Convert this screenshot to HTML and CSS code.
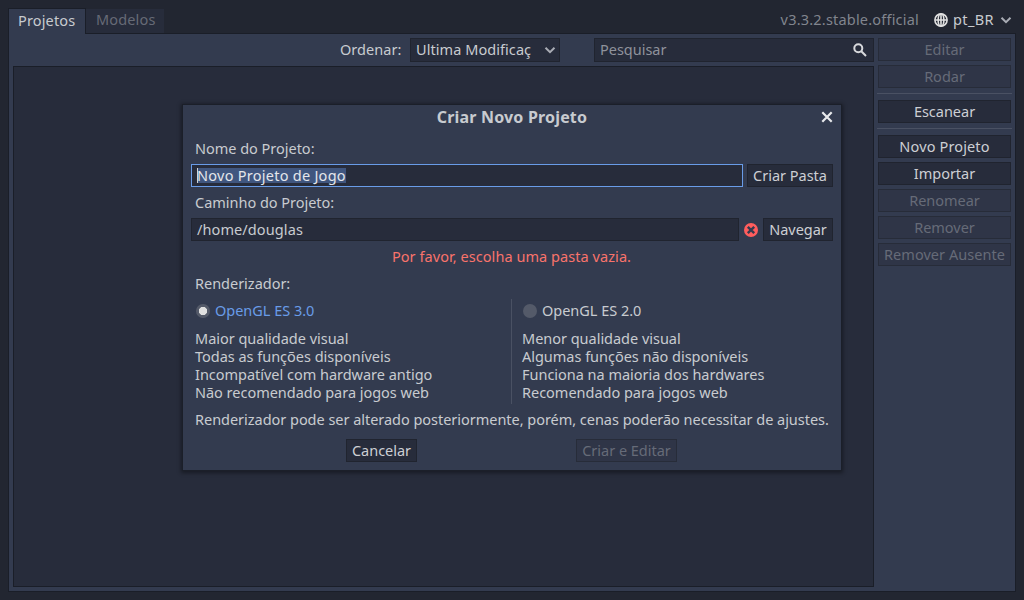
FILE: index.html
```
<!DOCTYPE html>
<html lang="pt-BR">
<head>
<meta charset="utf-8">
<title>Gerenciador de Projetos</title>
<link rel="stylesheet" href="styles.css">
</head>
<body>
<div class="app">
  <header class="topbar">
    <div class="tab tab-active"><span class="ls-tab">Projetos</span></div>
    <div class="tab tab-idle"><span class="ls-tab">Modelos</span></div>
    <div class="version">v3.3.2.stable.official</div>
    <div class="lang">
      <svg class="globe" width="14" height="14" viewBox="0 0 14 14"><circle cx="7" cy="7" r="6.100"/><ellipse cx="7" cy="7" rx="2.900" ry="6.100"/><path d="M1 7h12M7 1v12"/></svg>
      <span class="lang-name">pt_BR</span>
      <svg class="chevron" width="12" height="8" viewBox="0 0 12 8"><path d="M1.500 1.800 6 6.200l4.500-4.400"/></svg>
    </div>
  </header>
  <main class="panel">
    <section class="content">
      <div class="filters">
        <span class="sort-label">Ordenar:</span>
        <div class="select"><span>Ultima Modificaç</span><svg class="chevron" width="12" height="8" viewBox="0 0 12 8"><path d="M1.500 1.800 6 6.200l4.500-4.400"/></svg></div>
        <div class="search"><span>Pesquisar</span><svg class="lens" width="14" height="14" viewBox="0 0 14 14"><circle cx="5.300" cy="5.300" r="4"/><path d="m8.300 8.300 4.700 4.700"/></svg></div>
      </div>
      <div class="list"></div>
    </section>
    <aside class="actions">
      <button class="btn off">Editar</button>
      <button class="btn off">Rodar</button>
      <hr>
      <button class="btn">Escanear</button>
      <hr>
      <button class="btn ls-new">Novo Projeto</button>
      <button class="btn">Importar</button>
      <button class="btn off">Renomear</button>
      <button class="btn off">Remover</button>
      <button class="btn off ls-missing">Remover Ausente</button>
    </aside>
  </main>
</div>

<div class="dialog">
  <div class="title">Criar Novo Projeto<svg class="close" width="12" height="12" viewBox="0 0 12 12"><path d="m1.300 1.300 9.400 9.400m0-9.400-9.400 9.400"/></svg></div>
  <div class="label">Nome do Projeto:</div>
  <div class="row">
    <div class="input focus"><span class="selection">Novo Projeto de Jogo</span></div>
    <button class="btn mkdir">Criar Pasta</button>
  </div>
  <div class="label">Caminho do Projeto:</div>
  <div class="row">
    <div class="input"><span class="path">/home/douglas</span></div>
    <svg class="error-icon" width="16" height="16" viewBox="0 0 16 16"><circle cx="8" cy="8" r="7"/><path d="m4.800 4.800 6.400 6.400m0-6.400-6.400 6.400"/></svg>
    <button class="btn browse">Navegar</button>
  </div>
  <div class="message">Por favor, escolha uma pasta vazia.</div>
  <div class="label renderer-label">Renderizador:</div>
  <div class="renderers">
    <div class="renderer">
      <div class="option chosen"><span class="radio"></span><span class="option-name">OpenGL ES 3.0</span></div>
      <div class="desc">Maior qualidade visual<br>Todas as funções disponíveis<br>Incompatível com hardware antigo<br>Não recomendado para jogos web</div>
    </div>
    <div class="renderer second">
      <div class="option"><span class="radio"></span><span class="option-name">OpenGL ES 2.0</span></div>
      <div class="desc">Menor qualidade visual<br>Algumas funções não disponíveis<br>Funciona na maioria dos hardwares<br>Recomendado para jogos web</div>
    </div>
  </div>
  <div class="note">Renderizador pode ser alterado posteriormente, porém, cenas poderão necessitar de ajustes.</div>
  <div class="buttons">
    <button class="btn cancel">Cancelar</button>
    <button class="btn off create">Criar e Editar</button>
  </div>
</div>
</body>
</html>
```

FILE: styles.css
```
* { box-sizing: border-box; }

body {
  margin: 0;
  width: 1024px;
  height: 600px;
  overflow: hidden;
  background: #222631;
  color: #c8cbd0;
  font: 14.5px/18px "Noto Sans", sans-serif;
  letter-spacing: -0.02px;
  white-space: nowrap;
}

svg { display: block; fill: none; flex: none; }

.app {
  display: flex;
  flex-direction: column;
  height: 600px;
  padding: 8px;
}

.topbar { display: flex; height: 26px; margin-bottom: -1px; }

.tab { display: flex; align-items: center; padding-bottom: 4px; }
.tab-active {
  width: 78px;
  padding-left: 9px;
  border: 1px solid #1a1e28;
  border-bottom: 0;
  background: #333b4f;
  z-index: 1;
}
.tab-idle {
  width: 78px;
  height: 24px;
  margin-top: 1px;
  padding-left: 10px;
  background: #272c3b;
  color: #666a76;
}
.ls-tab { letter-spacing: 0.15px; }

.version {
  margin-left: auto;
  padding-top: 2px;
  color: #81858e;
  letter-spacing: 0.2px;
}
.lang { display: flex; align-items: center; height: 24px; margin: 0 4px 0 15px; }
.lang-name { width: 43px; margin: -2px 4px 0 5px; letter-spacing: 0.4px; }
.globe { stroke: #e0e0e0; stroke-width: 1.6; }
.chevron { stroke: #a9acb4; stroke-width: 2; }

.panel {
  display: flex;
  flex: 1;
  gap: 4px;
  padding: 4px 3px 4px 4px;
  border: 1px solid #1a1e28;
  background: #333b4f;
}

.content { display: flex; flex-direction: column; width: 861px; gap: 4px; }
.filters { display: flex; align-items: center; height: 24px; }
.filters span { padding-bottom: 2px; }
.sort-label { width: 63px; margin-left: 327px; letter-spacing: 0.05px; }
.select {
  display: flex;
  align-items: center;
  justify-content: space-between;
  width: 150px;
  height: 24px;
  margin-left: 7px;
  padding: 0 3px 0 5px;
  border: 1px solid #20242f;
  background: #272c3b;
  letter-spacing: 0.06px;
}
.search {
  display: flex;
  align-items: center;
  justify-content: space-between;
  width: 280px;
  height: 24px;
  margin-left: 34px;
  padding: 0 6px 0 5px;
  border: 1px solid #20242f;
  background: #272c3b;
  color: #8f929b;
}
.lens { stroke: #d8d9dc; stroke-width: 2; }
.list { flex: 1; border: 1px solid #1a1e28; background: #272c3b; }

.actions { display: flex; flex-direction: column; width: 135px; gap: 4px; }
.actions .btn { width: 133px; }
hr { width: 135px; height: 1px; margin: 1px 0 2px -1px; border: 0; background: #4a5163; }

.btn {
  height: 23px;
  padding: 0 0 1px;
  border: 1px solid #20242f;
  background: #272c3b;
  color: #cdcfd4;
  font: inherit;
  line-height: 18px;
  letter-spacing: inherit;
}
.off { border-color: #272c39; background: #2f3547; color: #666b78; }
.ls-new { letter-spacing: 0.14px; }
.ls-missing { letter-spacing: 0.04px; }

.dialog {
  position: absolute;
  left: 182px;
  top: 104px;
  width: 660px;
  height: 367px;
  padding: 0 8px;
  border: 1px solid #1b1f29;
  background: #333b4f;
  box-shadow: 0 1px 4px 1px rgba(0, 0, 0, 0.4);
}
.title {
  position: relative;
  height: 34px;
  padding-top: 3px;
  font-size: 16px;
  font-weight: 700;
  letter-spacing: 0.18px;
  text-align: center;
}
.close { position: absolute; right: 0; top: 6px; stroke: #e8e9ec; stroke-width: 2.2; }
.label { height: 25px; padding-left: 4px; }
.row { display: flex; height: 23px; margin-bottom: 6px; }
.input {
  flex: 1;
  padding: 1px 5px;
  border: 1px solid #20242f;
  background: #272c3b;
}
.focus { border-color: #699ce8; }
.selection {
  display: block;
  width: 149px;
  height: 15px;
  margin-top: 2px;
  background: #40567f;
  color: #e4e6eb;
  line-height: 15px;
  letter-spacing: 0.26px;
  box-shadow: inset 1px 0 #d0d2d7;
}
.path { display: block; letter-spacing: 0.1px; }
.mkdir { width: 86px; margin-left: 4px; }
.error-icon { margin: 4px 4px 0; }
.error-icon circle { fill: #ff5d5d; }
.error-icon path { stroke: #333b4f; stroke-width: 2.4; }
.browse { width: 70px; }
.message { height: 27px; padding-right: 1px; color: #f9736b; text-align: center; letter-spacing: 0.06px; }
.renderer-label { height: 24px; }

.renderers { display: flex; height: 105px; margin-top: 1px; }
.renderer { width: 320px; padding-left: 4px; }
.second { flex: 1; padding-left: 10px; border-left: 1px solid #4a5163; }
.option { display: flex; align-items: center; height: 23px; padding-left: 1px; }
.option-name { padding-bottom: 1px; }
.radio {
  width: 14px;
  height: 14px;
  margin: 1px 5px 0 0;
  border-radius: 50%;
  background: #545a69;
}
.chosen { color: #699ce8; }
.chosen .radio { background: radial-gradient(circle, #e0e0e0 3.8px, #545a69 4.5px); }
.desc { margin-top: 7px; }
.note { margin-top: 6px; padding-left: 4px; letter-spacing: -0.03px; }
.buttons { display: flex; margin-top: 11px; }
.cancel { width: 71px; margin-left: 155px; }
.create { width: 101px; margin-left: 159px; }
```
